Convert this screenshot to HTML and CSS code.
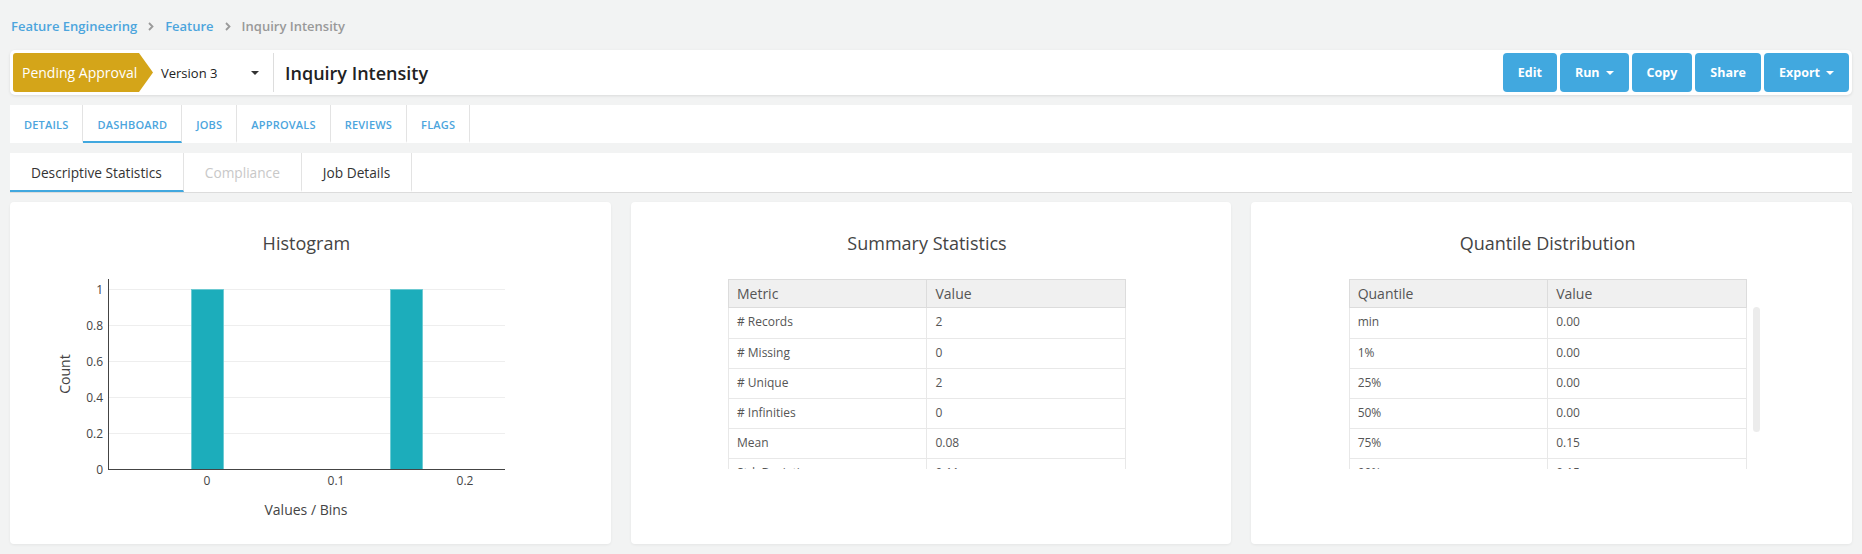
FILE: index.html
```html
<!DOCTYPE html>
<html lang="en">
<head>
<meta charset="utf-8">
<title>Inquiry Intensity</title>
<link rel="stylesheet" href="styles.css">
</head>
<body>
<div class="page">
  <nav class="breadcrumb">
    <a class="crumb">Feature Engineering</a>
    <svg class="chev" width="6" height="9" viewBox="0 0 6 9"><path d="M1 1 L4.5 4.5 L1 8" fill="none" stroke="#9a9a9a" stroke-width="1.8"/></svg>
    <a class="crumb">Feature</a>
    <svg class="chev" width="6" height="9" viewBox="0 0 6 9"><path d="M1 1 L4.5 4.5 L1 8" fill="none" stroke="#9a9a9a" stroke-width="1.8"/></svg>
    <span class="crumb current">Inquiry Intensity</span>
  </nav>

  <header class="titlebar">
    <div class="status">Pending Approval</div>
    <div class="version">
      <span>Version 3</span>
      <svg width="8" height="4" viewBox="0 0 8 4"><path d="M0 0 H8 L4 4 Z" fill="#333"/></svg>
    </div>
    <div class="divider"></div>
    <h1 class="title">Inquiry Intensity</h1>
    <div class="actions">
      <button class="btn">Edit</button>
      <button class="btn">Run <svg width="8" height="4" viewBox="0 0 8 4"><path d="M0 0 H8 L4 4 Z" fill="#fff"/></svg></button>
      <button class="btn">Copy</button>
      <button class="btn">Share</button>
      <button class="btn">Export <svg width="8" height="4" viewBox="0 0 8 4"><path d="M0 0 H8 L4 4 Z" fill="#fff"/></svg></button>
    </div>
  </header>

  <nav class="tabs">
    <a class="tab">DETAILS</a>
    <a class="tab active">DASHBOARD</a>
    <a class="tab">JOBS</a>
    <a class="tab">APPROVALS</a>
    <a class="tab">REVIEWS</a>
    <a class="tab">FLAGS</a>
  </nav>

  <nav class="subtabs">
    <a class="subtab active">Descriptive Statistics</a>
    <a class="subtab disabled">Compliance</a>
    <a class="subtab">Job Details</a>
  </nav>

  <main class="cards">
    <section class="card">
      <h2 class="card-title">Histogram</h2>
      <svg class="chart" width="568" height="275" viewBox="0 0 568 275">
        <g stroke="#eeeeee" stroke-width="1">
          <line x1="86" y1="34.5" x2="483" y2="34.5"/>
          <line x1="86" y1="70.5" x2="483" y2="70.5"/>
          <line x1="86" y1="106.5" x2="483" y2="106.5"/>
          <line x1="86" y1="142.5" x2="483" y2="142.5"/>
          <line x1="86" y1="178.5" x2="483" y2="178.5"/>
        </g>
        <g fill="#1cadbb" stroke="#67c9d2" stroke-width="0.8">
          <rect x="169.5" y="34.5" width="32" height="180"/>
          <rect x="368.5" y="34.5" width="32" height="180"/>
        </g>
        <g stroke="#444" stroke-width="1">
          <line x1="86.5" y1="24" x2="86.5" y2="215"/>
          <line x1="86" y1="214.5" x2="483" y2="214.5"/>
        </g>
        <g class="tick" text-anchor="end">
          <text x="81" y="39">1</text>
          <text x="81" y="75">0.8</text>
          <text x="81" y="111">0.6</text>
          <text x="81" y="147">0.4</text>
          <text x="81" y="183">0.2</text>
          <text x="81" y="219">0</text>
        </g>
        <g class="tick" text-anchor="middle">
          <text x="185" y="230">0</text>
          <text x="314" y="230">0.1</text>
          <text x="443" y="230">0.2</text>
        </g>
        <text class="axis-title" x="284" y="260" text-anchor="middle">Values / Bins</text>
        <text class="axis-title" x="0" y="0" text-anchor="middle" transform="translate(48 119) rotate(-90)">Count</text>
      </svg>
    </section>

    <section class="card">
      <h2 class="card-title">Summary Statistics</h2>
      <div class="tbl">
        <table class="tbl-head">
          <tr><th>Metric</th><th>Value</th></tr>
        </table>
        <div class="tbl-body">
          <table>
            <tr><td># Records</td><td>2</td></tr>
            <tr><td># Missing</td><td>0</td></tr>
            <tr><td># Unique</td><td>2</td></tr>
            <tr><td># Infinities</td><td>0</td></tr>
            <tr><td>Mean</td><td>0.08</td></tr>
            <tr><td>Std. Deviation</td><td>0.11</td></tr>
            <tr><td>Min</td><td>0.00</td></tr>
            <tr><td>Max</td><td>0.15</td></tr>
          </table>
        </div>
      </div>
    </section>

    <section class="card">
      <h2 class="card-title">Quantile Distribution</h2>
      <div class="tbl">
        <table class="tbl-head">
          <tr><th>Quantile</th><th>Value</th></tr>
        </table>
        <div class="tbl-body">
          <table>
            <tr><td>min</td><td>0.00</td></tr>
            <tr><td>1%</td><td>0.00</td></tr>
            <tr><td>25%</td><td>0.00</td></tr>
            <tr><td>50%</td><td>0.00</td></tr>
            <tr><td>75%</td><td>0.15</td></tr>
            <tr><td>99%</td><td>0.15</td></tr>
            <tr><td>max</td><td>0.15</td></tr>
          </table>
        </div>
        <div class="scroll-thumb"></div>
      </div>
    </section>
  </main>
</div>
</body>
</html>
```

FILE: styles.css
```css
* { box-sizing: border-box; }

html, body {
  margin: 0;
  background: #f2f3f3;
  font-family: "Open Sans", "Noto Sans", sans-serif;
  color: #333;
}

.page {
  padding: 16px 10px 10px;
}

/* Breadcrumb */
.breadcrumb {
  display: flex;
  align-items: center;
  height: 20px;
  font-size: 13px;
  font-weight: 600;
  gap: 11px;
  padding-left: 1px;
}
.crumb { color: #4ca5dd; text-decoration: none; }
.crumb.current { color: #999; }
.chev { display: block; }

/* Title bar */
.titlebar {
  margin-top: 14px;
  height: 45px;
  background: #fff;
  border-radius: 5px;
  box-shadow: 0 1px 3px rgba(0,0,0,0.10);
  padding: 3px;
  display: flex;
  align-items: stretch;
}
.status {
  width: 140px;
  background: #d4a519;
  color: #fff;
  font-size: 14px;
  display: flex;
  align-items: center;
  padding-left: 9px;
  border-radius: 3px 0 0 3px;
  clip-path: polygon(0 0, 126px 0, 100% 50%, 126px 100%, 0 100%);
}
.version {
  width: 110px;
  display: flex;
  align-items: center;
  justify-content: space-between;
  padding: 0 4px 0 8px;
  font-size: 13px;
  color: #222;
}
.divider {
  width: 1px;
  background: #ddd;
  margin-left: 10px;
}
.title {
  margin: 0 0 0 11px;
  font-size: 18px;
  font-weight: 600;
  color: #222;
  display: flex;
  align-items: center;
}
.actions {
  margin-left: auto;
  display: flex;
  gap: 3px;
}
.btn {
  border: none;
  background: #41a8df;
  color: #fff;
  font-family: inherit;
  font-size: 12.5px;
  font-weight: 700;
  border-radius: 4px;
  padding: 0 15px;
  display: flex;
  align-items: center;
  gap: 6px;
}

/* Tabs */
.tabs {
  margin-top: 10px;
  height: 38px;
  background: #fff;
  display: flex;
}
.tab {
  display: flex;
  align-items: center;
  padding: 2px 14px 0;
  font-size: 11px;
  font-weight: 600;
  letter-spacing: 0.2px;
  color: #4ca5dd;
  border-right: 1px solid #e3e3e3;
  border-bottom: 2px solid transparent;
}
.tab.active { border-bottom-color: #41a8df; }

.subtabs {
  margin-top: 10px;
  height: 40px;
  background: #fff;
  display: flex;
  border-bottom: 1px solid #dcdcdc;
}
.subtab {
  display: flex;
  align-items: center;
  padding: 2px 21px 0;
  font-size: 13.7px;
  color: #333;
  border-right: 1px solid #e3e3e3;
  border-bottom: 2px solid transparent;
}
.subtab.active { border-bottom-color: #41a8df; }
.subtab.disabled { color: #c8c8c8; }

/* Cards */
.cards {
  margin-top: 9px;
  display: grid;
  grid-template-columns: repeat(3, 1fr);
  gap: 20px;
}
.card {
  height: 342px;
  background: #fff;
  border-radius: 4px;
  box-shadow: 0 1px 3px rgba(0,0,0,0.06);
  padding: 29px 20px 0 12px;
}
.card-title {
  margin: 0;
  font-size: 18px;
  line-height: 24px;
  font-weight: 400;
  color: #444;
  text-align: center;
}
.chart { display: block; }
.chart text { font-family: "Open Sans", sans-serif; fill: #444; }
.tick { font-size: 12px; }
.axis-title { font-size: 14px; }

/* Tables */
.tbl {
  position: relative;
  width: 70%;
  margin: 24px auto 0;
}
.tbl table {
  width: 100%;
  border-collapse: collapse;
  table-layout: fixed;
}
.tbl-head th {
  height: 28px;
  padding: 0 8px;
  text-align: left;
  font-size: 14px;
  font-weight: 400;
  color: #555;
  background: #f0f0f0;
  border: 1px solid #dcdcdc;
}
.tbl-body {
  height: 161px;
  overflow: hidden;
}
.tbl-body td {
  height: 30px;
  padding: 5px 8px 0;
  vertical-align: top;
  font-size: 12px;
  line-height: 17px;
  color: #555;
  border: 1px solid #e8e8e8;
  border-top: none;
}
.scroll-thumb {
  position: absolute;
  top: 28px;
  left: calc(100% + 6px);
  width: 7px;
  height: 125px;
  border-radius: 4px;
  background: #ececec;
}
```
